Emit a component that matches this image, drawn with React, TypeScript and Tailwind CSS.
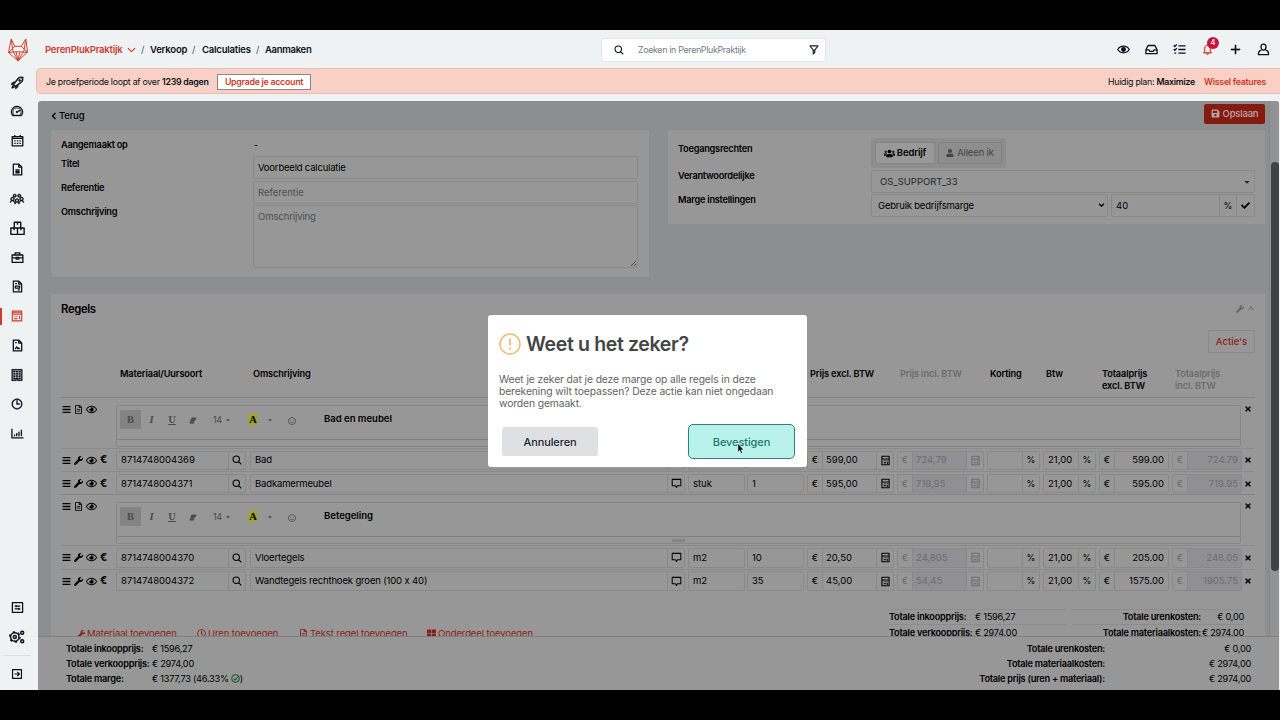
import React from "react";
import {
  LiaRocketSolid, LiaTachometerAltSolid, LiaUsersSolid, LiaBuilding, LiaClock, LiaFilterSolid, LiaBell, LiaPlusSolid,
} from "react-icons/lia";
import { FaBars, FaWrench, FaUsers, FaUser, FaCheck, FaThLarge, FaEraser, FaSave, FaEuroSign, FaTimes, FaRegFileAlt, FaRegEye, FaRegClock, FaRegSmile, FaCaretDown } from "react-icons/fa";

type IconProps = { className?: string };
type IconType = React.ComponentType<IconProps>;

function Glyph({ className, d, w = 1.3, box = "0 0 14 14" }: IconProps & { d: string; w?: number; box?: string }) {
  return (
    <svg viewBox={box} className={className} fill="none" stroke="currentColor">
      <path d={d} strokeWidth={w} strokeLinejoin="round" />
    </svg>
  );
}

const Fox = () => (
  <Glyph box="0 0 20 24" className="h-6 w-5 text-[#d8402f]" w={1} d="M3.200 1 .500 14.500 10 23l9.500-9L17.800 1 13.300 8.300H6.800L3.200 1 4.800 12.500M17.800 1 16 12.500M6.800 8.300 .500 14.500l7.700-.700M13.300 8.300l6.200 6.200-7.700-.700M4.800 12.500 10 23l6-10.500M8.200 13.800 10 23l1.800-9.200z" />
);
const Calendar = (p: IconProps) => <Glyph {...p} w={1.4} d="M1.300 2.800h11.400v9.900H1.300zM1.300 4.700h11.400M4 1v2.500M10 1v2.500M3.500 7.300H5M6.300 7.300h1.500M9 7.300h1.500M3.500 10H5M6.300 10h1.500M9 10h1.500" />;
const Doc = (p: IconProps) => <Glyph {...p} w={1.4} d="M2.500 1.200h6l3 3v8.600h-9zM8.300 1.200v3.200h3.200M4.700 7.300h4.600M4.700 9h4.600M4.700 10.500h4.600" />;
const Boxes = (p: IconProps) => <Glyph {...p} d="M4 1.200h6v5.300H4zM7 1.200v2.200M.800 6.500H7v6H.800zM7 6.500h6.200v6H7zM3.800 6.500v2.200M10.200 6.500v2.200" />;
const Briefcase = (p: IconProps) => <Glyph {...p} w={1.4} d="M1.200 4.300h11.600v8H1.200zM4.400 4.300V2h5.200v2.300M1.200 7.500h4.300M8.500 7.500h4.300M5.500 7h3v1.700h-3z" />;
const Invoice = (p: IconProps) => <Glyph {...p} d="M2.500 1.200h6l3 3v8.600h-9zM8.300 1.200v3.200h3.200M4.500 4h2M4.700 6.500h4.600v2.200H4.700zM7.300 10.700h2.200" />;
const Calc = (p: IconProps) => <Glyph {...p} w={1.3} d="M1.500 1.300h11v11.400h-11zM1.500 5h11M1.500 3.200h11M3.800 7.500H5M6.300 7.500h1.200M3.800 10h3.700M10 7v3.800" />;
const Contract = (p: IconProps) => <Glyph {...p} w={1.4} d="M2.500 1.200h6l3 3v8.600h-9zM8.300 1.200v3.200h3.200M4.500 4h1.700M4.500 10.800l1.600-2.300 1.300 2 .800-.900 1.300 1.200" />;
const Chart = (p: IconProps) => <Glyph {...p} w={1.400} d="M1 2v9.800h12.500M3.800 8v2M6.200 6.500V10M8.600 5v5M11.200 3v7" />;
const Sliders = (p: IconProps) => <Glyph {...p} w={1.4} d="M1.500 1.800h11v10.400h-11zM4 5.500h6M4 8.500h6M5.500 4.200v2.600M8.500 7.200v2.600" />;
const Exit = (p: IconProps) => <Glyph {...p} w={1.4} d="M1.800 1.800h10.400v10.400H1.800zM4 7h5.500M7.300 4.500 9.800 7 7.300 9.500" />;
const Tray = (p: IconProps) => <Glyph {...p} w={1.4} d="M1 7.300 3.300 2.700h7.400L13 7.300v4.200H1zM1 7.300h3.200l1 1.700h3.600l1-1.700H13" />;
const Tasks = (p: IconProps) => <Glyph {...p} w={1.4} d="M5.800 3H13.500M5.800 7H13.500M5.800 11H13.500M.800 2.600l1.100 1.200 2.200-2.300M.800 6.600l1.100 1.200 2.200-2.300M1.500 11h2" />;
const Bubble = (p: IconProps) => <Glyph {...p} box="0 0 12 12" w={1.1} d="M1.300 1.500h9.400v7H7L6 10.300 5 8.500H1.300z" />;
const CalcSmall = (p: IconProps) => <Glyph {...p} box="0 0 10 12" w={1.2} d="M1 1.200h8v9.600H1zM1 4.300h8M3 6.300h1M5 6.300h1M7 6.300h.8M3 8.500h3M7.200 8v1.500" />;
const Search = (p: IconProps) => <Glyph {...p} box="0 0 12 12" w={1.3} d="M9 5.100A3.900 3.900 0 1 1 1.200 5.100 3.900 3.900 0 0 1 9 5.100zM7.900 7.900 11.200 11.200" />;
const Person = (p: IconProps) => <Glyph {...p} w={1.4} d="M7 1.200c1.700 0 2.700 1.100 2.700 2.900S8.700 7.600 7 7.600 4.300 5.900 4.300 4.100 5.300 1.200 7 1.200zM4.600 7.800C2.600 8 1.500 9.500 1.500 12.500h11c0-3-1.100-4.500-3.100-4.700" />;
const Eye = ({ className }: IconProps) => (
  <svg viewBox="0 0 14 14" className={className} fill="none" stroke="currentColor" strokeWidth="1.300">
    <path d="M.800 7C3.500 2.300 10.500 2.300 13.200 7 10.500 11.700 3.500 11.700.800 7z" /><circle cx="7" cy="7" r="2" fill="currentColor" />
  </svg>
);
const Cogs = ({ className }: IconProps) => (
  <svg viewBox="0 0 16 14" className={className} fill="none" stroke="currentColor" strokeWidth="1.500">
    <circle cx="5.800" cy="7" r="4.200" /><circle cx="5.800" cy="7" r="1.500" /><circle cx="5.800" cy="7" r="5.200" strokeWidth="1.300" strokeDasharray="2.300 3.150" />
    <circle cx="13.200" cy="2.800" r="1.500" /><circle cx="13.200" cy="11.200" r="1.500" />
  </svg>
);

const nav: IconType[] = [LiaRocketSolid, LiaTachometerAltSolid, Calendar, Doc, LiaUsersSolid, Boxes, Briefcase, Invoice, Calc, Contract, LiaBuilding, LiaClock, Chart];
const navSize = ["size-[15px] stroke-[1.5]", "size-[16px] stroke-[0.8]", "size-[13px]", "size-[13px]", "size-[16px] stroke-[0.8]", "size-[15px]", "size-[13px]", "size-[13px]", "size-[12px]", "size-[13px]", "size-[14px] stroke-1", "size-[14px] stroke-1", "size-[13px]"];

function Sidebar() {
  return (
    <aside className="flex w-9 shrink-0 flex-col items-center bg-[#eef2f3] pr-[2px] text-[#0c1116]">
      <div className="flex h-[37px] items-center pt-[2px] pl-[2px]"><Fox /></div>
      <nav className="flex w-full flex-col pt-[0.500px]">
        {nav.map((Icon, i) => (
          <div key={i} className={i === 8 ? "flex h-[29.25px] items-center text-[#cf3a2a]" : "flex h-[29.25px] items-center"}>
            <span className={i === 8 ? "h-[17px] w-[1.500px] bg-[#cf3a2a]" : "h-4 w-[1.500px]"} />
            <span className="flex flex-1 justify-center pr-[1.500px]"><Icon className={navSize[i]} /></span>
          </div>
        ))}
      </nav>
      <div className="mt-auto flex w-full flex-col items-center">
        <div className="flex h-[29px] items-center"><Sliders className="size-[13px]" /></div>
        <div className="flex h-[29px] items-center"><Cogs className="h-[14px] w-[16px]" /></div>
        <div className="mt-[4px] h-px w-7 bg-[#dadfe1]" />
        <div className="flex h-[34px] items-center pt-[2px]"><Exit className="size-[12px]" /></div>
      </div>
    </aside>
  );
}

function Header() {
  return (
    <header className="flex h-[37px] items-center pt-[2px] text-[9.500px] font-semibold tracking-[-0.200px] text-[#0c1116]">
      <div className="flex w-[565px] items-center pl-[9px]">
        <span className="w-[78px] text-[#cf3a2a]">PerenPlukPraktijk</span>
        <Glyph box="0 0 10 6" className="ml-[4px] h-[6px] w-[9px] text-[#cf3a2a]" w={1.2} d="m1 .8 4 4 4-4" />
        <span className="ml-[5px] w-[9px] font-normal text-gray-600">/</span>
        <span className="w-[42px]">Verkoop</span>
        <span className="w-[10px] font-normal text-gray-600">/</span>
        <span className="w-[54px]">Calculaties</span>
        <span className="w-[9px] font-normal text-gray-600">/</span>
        <span className="tracking-[-0.300px]">Aanmaken</span>
      </div>
      <div className="flex h-[24px] w-[225px] items-center rounded-[3px] border border-[#e1e6e8] bg-white pr-[5px] pl-[12px]">
        <Search className="size-[10px]" />
        <span className="ml-[14px] flex-1 pt-px text-[8.800px] font-normal tracking-[-0.300px] text-[#737b83]">Zoeken in PerenPlukPraktijk</span>
        <LiaFilterSolid className="size-[12px] stroke-1" />
      </div>
      <div className="ml-auto flex items-center gap-[15px] pr-[10px]">
        <Eye className="size-[13px]" />
        <Tray className="size-[13px]" />
        <Tasks className="size-[13px]" />
        <span className="relative text-[#d8402f]">
          <LiaBell className="size-[13px] stroke-1" />
          <span className="absolute -top-[6px] left-[6px] flex size-[12px] items-center justify-center rounded-full bg-[#c9143c] text-[7.500px] font-medium tracking-normal text-white">4</span>
        </span>
        <LiaPlusSolid className="size-[13px] stroke-2" />
        <Person className="size-[13px]" />
      </div>
    </header>
  );
}

function Banner() {
  return (
    <div className="mt-px flex h-[26px] items-center rounded-l-[5px] border-y border-l border-[#e6bfb4] bg-[#f8d0c5] pt-px pr-[14px] pl-[9px] text-[8.800px] tracking-[-0.270px] text-[#0c1116]">
      <span className="w-[162px] whitespace-nowrap">Je proefperiode loopt af over <b className="font-semibold">1239 dagen</b></span>
      <span className="ml-[9px] flex h-[16px] w-[94px] items-center justify-center border border-[#8d8583] bg-white font-semibold text-[#cf3a2a]">Upgrade je account</span>
      <span className="ml-auto">Huidig plan: <b className="font-semibold">Maximize</b></span>
      <span className="ml-[9px] font-semibold text-[#cf3a2a]">Wissel features</span>
    </div>
  );
}

const field = "flex items-center rounded-[2px] border border-[#898989] text-[9.500px] tracking-[-0.200px]";
const label = "font-semibold tracking-[-0.240px]";

function General() {
  return (
    <div className="flex h-[164px] shrink-0 items-start justify-between">
      <section className="flex h-[147px] w-[598px] flex-col bg-[#979797] pl-[10px] text-[9.200px]">
        <div className="flex h-[26px] items-center pt-[3px]"><b className={label + " w-[193px]"}>Aangemaakt op</b><span>-</span></div>
        <div className="flex h-[25px]"><b className={label + " w-[192px] pt-[2px]"}>Titel</b><div className={field + " h-[23px] w-[385px] pt-px pl-1"}>Voorbeeld calculatie</div></div>
        <div className="flex h-[24px]"><b className={label + " w-[192px] pt-px"}>Referentie</b><div className={field + " h-[23px] w-[385px] pl-1 tracking-[0px] text-[#4c4f52]"}>Referentie</div></div>
        <div className="flex h-[64px]">
          <b className={label + " w-[192px] pt-px"}>Omschrijving</b>
          <div className={field + " h-[63px] w-[385px] justify-between pl-1 text-[#4c4f52]"}>
            <span className="self-start pt-[5px] tracking-[-0.100px]">Omschrijving</span>
            <svg viewBox="0 0 7 7" className="size-[7px] self-end text-[#333]" stroke="currentColor" strokeWidth=".7"><path d="M1 6 6 1M4 6l2-2" /></svg>
          </div>
        </div>
      </section>
      <section className="flex h-[94px] w-[597px] flex-col bg-[#979797] pl-[10px] text-[9.200px]">
        <div className="flex h-[40px] pt-[8px]">
          <b className={label + " w-[193px] pt-[5px]"}>Toegangsrechten</b>
          <div className="flex h-[30px] w-[135px] items-center justify-between rounded-[3px] bg-[#8d8d8d] px-1 text-[9.500px] tracking-[-0.150px]">
            <span className="flex h-[22px] w-[60px] items-center justify-center gap-[2px] rounded-[2px] border border-[#848484] bg-[#999] font-semibold"><FaUsers className="size-[11px]" />Bedrijf</span>
            <span className="flex h-[22px] w-[64px] items-center justify-center gap-[3px] rounded-[2px] border border-[#808080] text-[#444]"><FaUser className="size-[8px]" />Alleen ik</span>
          </div>
        </div>
        <div className="flex h-[24px]">
          <b className={label + " w-[193px]"}>Verantwoordelijke</b>
          <div className={field + " h-[23px] w-[384px] justify-between pr-[3px] pl-2 tracking-[0px] text-[#24272a]"}>OS_SUPPORT_33<FaCaretDown className="size-[8px]" /></div>
        </div>
        <div className="flex h-[24px]">
          <b className={label + " w-[193px]"}>Marge instellingen</b>
          <div className={field + " h-[23px] w-[237px] justify-between pr-[2px] pl-[6px]"}>
            Gebruik bedrijfsmarge
            <Glyph box="0 0 8 6" className="h-[5px] w-[7px]" w={1.6} d="m1 1 3 3 3-3" />
          </div>
          <div className={field + " ml-[3px] h-[23px] w-[144px] tracking-[0px]"}>
            <span className="flex-1 pl-1">40</span>
            <span className="flex h-full w-[17px] items-center justify-center border-l border-[#898989] text-[9px]">%</span>
            <span className="flex h-full w-[18px] items-center justify-center border-l border-[#898989]"><FaCheck className="size-[9px]" /></span>
          </div>
        </div>
      </section>
    </div>
  );
}

function TextRow({ title }: { title: string }) {
  return (
    <div className="flex h-[50.900px] shrink-0 border-t border-[#858585] pt-[7px]">
      <div className="flex h-[9px] w-[55px] gap-[3px] pl-px"><FaBars className="size-[9px]" /><FaRegFileAlt className="size-[9px]" /><FaRegEye className="-mt-px size-[11px]" /></div>
      <div className="flex h-[42px] w-[1125px] flex-col rounded-[2px] border border-[#878787]">
        <div className="flex h-[34px] border-b border-[#808080]">
          <div className="flex w-[207px] items-start pt-[4px] pl-[3px] text-[10.500px] text-[#4b4b4b]">
            <span className="flex h-[19px] w-[21px] items-center justify-center rounded-[1px] bg-[#838383] font-['Liberation_Serif'] font-bold">B</span>
            <span className="flex h-[19px] w-[21px] items-center justify-center font-['Liberation_Serif'] font-bold italic">I</span>
            <span className="flex h-[19px] w-[20px] items-center justify-center font-['Liberation_Serif'] font-bold underline">U</span>
            <span className="flex h-[20px] w-[22px] items-center justify-center"><Glyph box="0 0 10 9" className="h-[7px] w-[8px] fill-[#4b4b4b]" d="M3.500 1.200h5.700L6.700 5H1.800zM1.500 6 1 8h4.500l.8-2z" w={.9} /></span>
            <span className="ml-[9px] flex h-[19px] w-[26px] items-center gap-[3px] text-[9px] tracking-[-0.300px]">14<FaCaretDown className="size-[6px]" /></span>
            <span className="mt-[4px] ml-[10px] flex h-[11px] w-[8px] items-center justify-center bg-[#a5a814] font-['Liberation_Serif'] font-bold text-black">A</span>
            <span className="flex h-[19px] w-[25px] items-center justify-center"><FaCaretDown className="size-[6px]" /></span>
            <span className="flex h-[22px] w-[20px] items-center justify-center"><FaRegSmile className="size-[8px]" /></span>
          </div>
          <b className="pt-[7px] text-[9.600px] font-semibold tracking-[-0.050px]">{title}</b>
        </div>
        <div className="flex flex-1 items-center justify-center"><span className="h-[3px] w-[13px] bg-[#858585]" /></div>
      </div>
      <FaTimes className="ml-[3px] size-[8px]" />
    </div>
  );
}

const cell = "flex h-[19.500px] shrink-0 items-center rounded-[2px] border border-[#898989]";
const part = "flex h-full shrink-0 items-center justify-center";

type Item = { code: string; name: string; unit: string; qty: string; ex: string; inc: string; tot: string; totInc: string };
const group1: Item[] = [
  { code: "8714748004369", name: "Bad", unit: "stuk", qty: "1", ex: "599,00", inc: "724,79", tot: "599.00", totInc: "724.79" },
  { code: "8714748004371", name: "Badkamermeubel", unit: "stuk", qty: "1", ex: "595,00", inc: "719,95", tot: "595.00", totInc: "719.95" },
];
const group2: Item[] = [
  { code: "8714748004370", name: "Vloertegels", unit: "m2", qty: "10", ex: "20,50", inc: "24,805", tot: "205.00", totInc: "248.05" },
  { code: "8714748004372", name: "Wandtegels rechthoek groen (100 x 40)", unit: "m2", qty: "35", ex: "45,00", inc: "54,45", tot: "1575.00", totInc: "1905.75" },
];

function ItemRow({ item }: { item: Item }) {
  return (
    <div className="flex h-[23.300px] shrink-0 items-center border-t border-[#8a8a8a] pt-[0.500px] text-[9.500px]">
      <div className="flex w-[55px] shrink-0 items-center gap-[3px] pl-px"><FaBars className="size-[9px]" /><FaWrench className="size-[9px]" /><FaRegEye className="size-[11px]" /><span className="text-[10.500px] font-bold">€</span></div>
      <div className={cell + " w-[130px] pl-1"}><span className="flex-1">{item.code}</span><span className={part + " w-[17px] border-l border-[#898989]"}><Search className="size-[10px]" /></span></div>
      <div className={cell + " ml-[4px] w-[435px] pl-[4px]"}><span className="flex-1 tracking-[-0.150px]">{item.name}</span><span className={part + " w-[17px] border-l border-[#898989]"}><Bubble className="size-[11px]" /></span></div>
      <div className={cell + " ml-[3px] w-[57px] pl-1"}>{item.unit}</div>
      <div className={cell + " ml-[2px] w-[57px] pl-1"}>{item.qty}</div>
      <div className={cell + " ml-[3px] w-[87px]"}><span className={part + " w-[14px]"}>€</span><span className="flex h-full flex-1 items-center border-x border-[#898989] pl-[3px]">{item.ex}</span><span className={part + " w-[16px]"}><CalcSmall className="h-[11px] w-[9px]" /></span></div>
      <div className={cell + " ml-[3px] w-[87px] text-[#6c6c6c]"}><span className={part + " w-[14px]"}>€</span><span className="flex h-full flex-1 items-center border-x border-[#898989] bg-[#909092] pl-[3px]">{item.inc}</span><span className={part + " w-[16px]"}><CalcSmall className="h-[11px] w-[9px]" /></span></div>
      <div className={cell + " ml-[3px] w-[53px] justify-end"}><span className={part + " w-[17px] border-l border-[#898989] text-[9px]"}>%</span></div>
      <div className={cell + " ml-[3px] w-[53px]"}><span className="flex-1 pl-1">21,00</span><span className={part + " w-[17px] border-l border-[#898989] text-[9px]"}>%</span></div>
      <div className={cell + " ml-[3px] w-[70px]"}><span className={part + " w-[14px]"}>€</span><span className="flex h-full flex-1 items-center justify-end border-l border-[#898989] pr-[4px]">{item.tot}</span></div>
      <div className={cell + " ml-[3px] w-[70px] text-[#6c6c6c]"}><span className={part + " w-[14px]"}>€</span><span className="flex h-full flex-1 items-center justify-end border-l border-[#898989] bg-[#909092] pr-[3px]">{item.totInc}</span></div>
      <FaTimes className="ml-[2px] size-[8px] shrink-0" />
    </div>
  );
}

function Lines() {
  return (
    <section className="flex h-[342px] shrink-0 flex-col overflow-hidden bg-[#979797] pr-[10px] pl-[10px]">
      <div className="flex h-[29px] shrink-0 items-center justify-between">
        <h2 className="text-[11.300px] font-semibold tracking-[-0.350px]">Regels</h2>
        <span className="flex items-center gap-[3px] text-[#646464]"><FaWrench className="size-[8px]" /><Glyph box="0 0 8 6" className="h-[5px] w-[8px]" w={1.2} d="m1 5 3-4 3 4" /></span>
      </div>
      <div className="flex h-[37px] shrink-0 justify-end pt-[7px]"><span className="flex h-[23px] w-[47px] items-center justify-center border border-[#898989] text-[9.500px] font-medium text-[#8b1d12]">Actie's</span></div>
      <div className="flex h-[37px] shrink-0 pt-[8px] pl-[59px] text-[9.200px] leading-[12px] font-semibold tracking-[-0.120px] whitespace-nowrap">
        <span className="w-[133px]">Materiaal/Uursoort</span>
        <span className="w-[557px]">Omschrijving</span>
        <span className="w-[90px]">Prijs excl. BTW</span>
        <span className="w-[90px] text-[#6c6c6c]">Prijs incl. BTW</span>
        <span className="w-[56px]">Korting</span>
        <span className="w-[56px]">Btw</span>
        <span className="w-[73px]">Totaalprijs<br />excl. BTW</span>
        <span className="text-[#6c6c6c]">Totaalprijs<br />incl. BTW</span>
      </div>
      <TextRow title="Bad en meubel" />
      {group1.map((it) => <ItemRow key={it.code} item={it} />)}
      <TextRow title="Betegeling" />
      {group2.map((it) => <ItemRow key={it.code} item={it} />)}
      <div className="flex shrink-0 items-start pt-[17px] text-[9.200px] tracking-[-0.240px]">
        <div className="flex w-[827px] pt-[19px] pl-[16px] text-[9.500px] tracking-[-0.100px] whitespace-nowrap text-[#8b1d12]">
          <span className="flex w-[120px] items-center gap-[2px]"><FaWrench className="size-[8px]" />Materiaal toevoegen</span>
          <span className="flex w-[102px] items-center gap-[2px]"><FaRegClock className="size-[9px]" />Uren toevoegen</span>
          <span className="flex w-[128px] items-center gap-[2px]"><FaRegFileAlt className="size-[9px]" />Tekst regel toevoegen</span>
          <span className="flex items-center gap-[2px]"><FaThLarge className="size-[9px]" />Onderdeel toevoegen</span>
        </div>
        <div className="w-[178px]">
          {[["Totale inkoopprijs:", "€ 1596,27"], ["Totale verkoopprijs:", "€ 2974,00"]].map(([l, v]) => (
            <div key={l} className="flex h-[15.500px] items-center border-t border-[#8c8c8c] pl-px"><b className="w-[86px] font-semibold whitespace-nowrap">{l}</b><span>{v}</span></div>
          ))}
        </div>
        <div className="ml-[6px] w-[172px]">
          {[["Totale urenkosten:", "€ 0,00"], ["Totale materiaalkosten:", "€ 2974,00"]].map(([l, v]) => (
            <div key={l} className="flex h-[15.500px] items-center justify-end border-t border-[#8c8c8c]"><b className="font-semibold whitespace-nowrap">{l}</b><span className="w-[43px] text-right whitespace-nowrap">{v}</span></div>
          ))}
        </div>
      </div>
    </section>
  );
}

function Footer() {
  return (
    <footer className="flex h-[54px] shrink-0 justify-between border-t border-[#808080] bg-[#979797] pt-[4px] pr-[28px] pl-[28px] text-[9.200px] tracking-[-0.240px]">
      <div>
        {[["Totale inkoopprijs:", "€ 1596,27"], ["Totale verkoopprijs:", "€ 2974,00"]].map(([l, v]) => (
          <div key={l} className="flex h-[15px] items-center"><b className="w-[86px] font-semibold whitespace-nowrap">{l}</b><span>{v}</span></div>
        ))}
        <div className="flex h-[15px] items-center"><b className="w-[86px] font-semibold">Totale marge:</b><span>€ 1377,73 (46.33%</span>
          <svg viewBox="0 0 10 10" className="ml-[2px] size-[9px] text-[#175c2e]" fill="none" stroke="currentColor" strokeWidth="1.200"><circle cx="5" cy="5" r="4.200" /><path d="m2.800 5 1.600 1.700L7.400 3.500" /></svg><span>)</span>
        </div>
      </div>
      <div>
        {[["Totale urenkosten:", "€ 0,00"], ["Totale materiaalkosten:", "€ 2974,00"], ["Totale prijs (uren + materiaal):", "€ 2974,00"]].map(([l, v]) => (
          <div key={l} className="flex h-[15px] items-center justify-end"><b className="font-semibold">{l}</b><span className="w-[146px] text-right">{v}</span></div>
        ))}
      </div>
    </footer>
  );
}

function Dialog() {
  return (
    <div role="dialog" className="absolute top-[315px] left-[488px] flex h-[152px] w-[319px] flex-col rounded-[3px] bg-white px-[11px] pt-[14px] text-[#444]">
      <h1 className="flex h-[29px] items-center gap-[5px] text-[19.500px] font-semibold tracking-[-0.350px] whitespace-nowrap">
        <svg viewBox="0 0 22 22" className="size-[22px] text-[#edbb78]" fill="none" stroke="currentColor" strokeWidth="1.500"><circle cx="11" cy="11" r="10" /><path d="M11 5.500v7M11 14.500v2" strokeWidth="1.800" /></svg>
        Weet u het zeker?
      </h1>
      <p className="mt-[15px] text-[10.300px] leading-[12px] tracking-[-0.100px] whitespace-nowrap text-[#626262]">Weet je zeker dat je deze marge op alle regels in deze<br />berekening wilt toepassen? Deze actie kan niet ongedaan<br />worden gemaakt.</p>
      <div className="mt-[15px] flex items-center justify-between pr-px pl-[3px] text-[11px] font-medium tracking-[-0.100px]">
        <button className="h-[29px] w-[96px] rounded-[3px] bg-[#dee0e4] text-[#22262e]">Annuleren</button>
        <button className="h-[35px] w-[107px] rounded-[5px] border-[1.5px] border-[#2c8478] bg-[#b9f2eb] text-[#1b7a70]">Bevestigen</button>
      </div>
    </div>
  );
}

export default function App() {
  return (
    <div className="relative flex h-[720px] w-[1280px] overflow-hidden bg-black py-[30px] font-[Inter,sans-serif] leading-[12px] [font-feature-settings:'calt'_0]">
      <Sidebar />
      <div className="flex min-w-0 flex-1 flex-col bg-[#eef2f3]">
        <Header />
        <Banner />
        <main className="mt-[6.500px] mr-px ml-[2px] flex flex-1 flex-col overflow-hidden rounded-t-[3px] bg-[#8d8e8f] text-black">
          <div className="flex h-[535.500px] shrink-0">
            <div className="flex w-[1231px] flex-col pr-[4px] pl-[13px]">
              <div className="flex h-[29.500px] shrink-0 items-center justify-between">
                <span className="flex items-center gap-[2px] pt-px text-[9.500px] font-medium tracking-[-0.200px]"><Glyph box="0 0 6 8" className="h-[8px] w-[6px]" w={1.4} d="M4.500 1 1.500 4l3 3" />Terug</span>
                <span className="mb-[3px] flex h-[20px] w-[61px] items-center justify-center gap-[3px] rounded-[2px] bg-[#851a10] text-[9.500px] font-medium tracking-[-0.200px] text-[#b5a9a7]"><FaSave className="size-[9px]" />Opslaan</span>
              </div>
              <General />
              <Lines />
            </div>
            <div className="flex w-[10px] justify-center border-l border-[#868686] bg-[#939393] pt-[61px]"><span className="h-[409px] w-[8px] rounded-full bg-[#424242]" /></div>
          </div>
          <Footer />
        </main>
      </div>
      <Dialog />
      <svg viewBox="0 0 8 12" className="absolute top-[442px] left-[737px] h-[13px] w-[8px]"><path d="M.8.8v9l2-1.800 1.200 3 1.600-.7-1.300-2.900h2.600z" fill="#111" stroke="#fff" strokeWidth=".6" /></svg>
    </div>
  );
}
